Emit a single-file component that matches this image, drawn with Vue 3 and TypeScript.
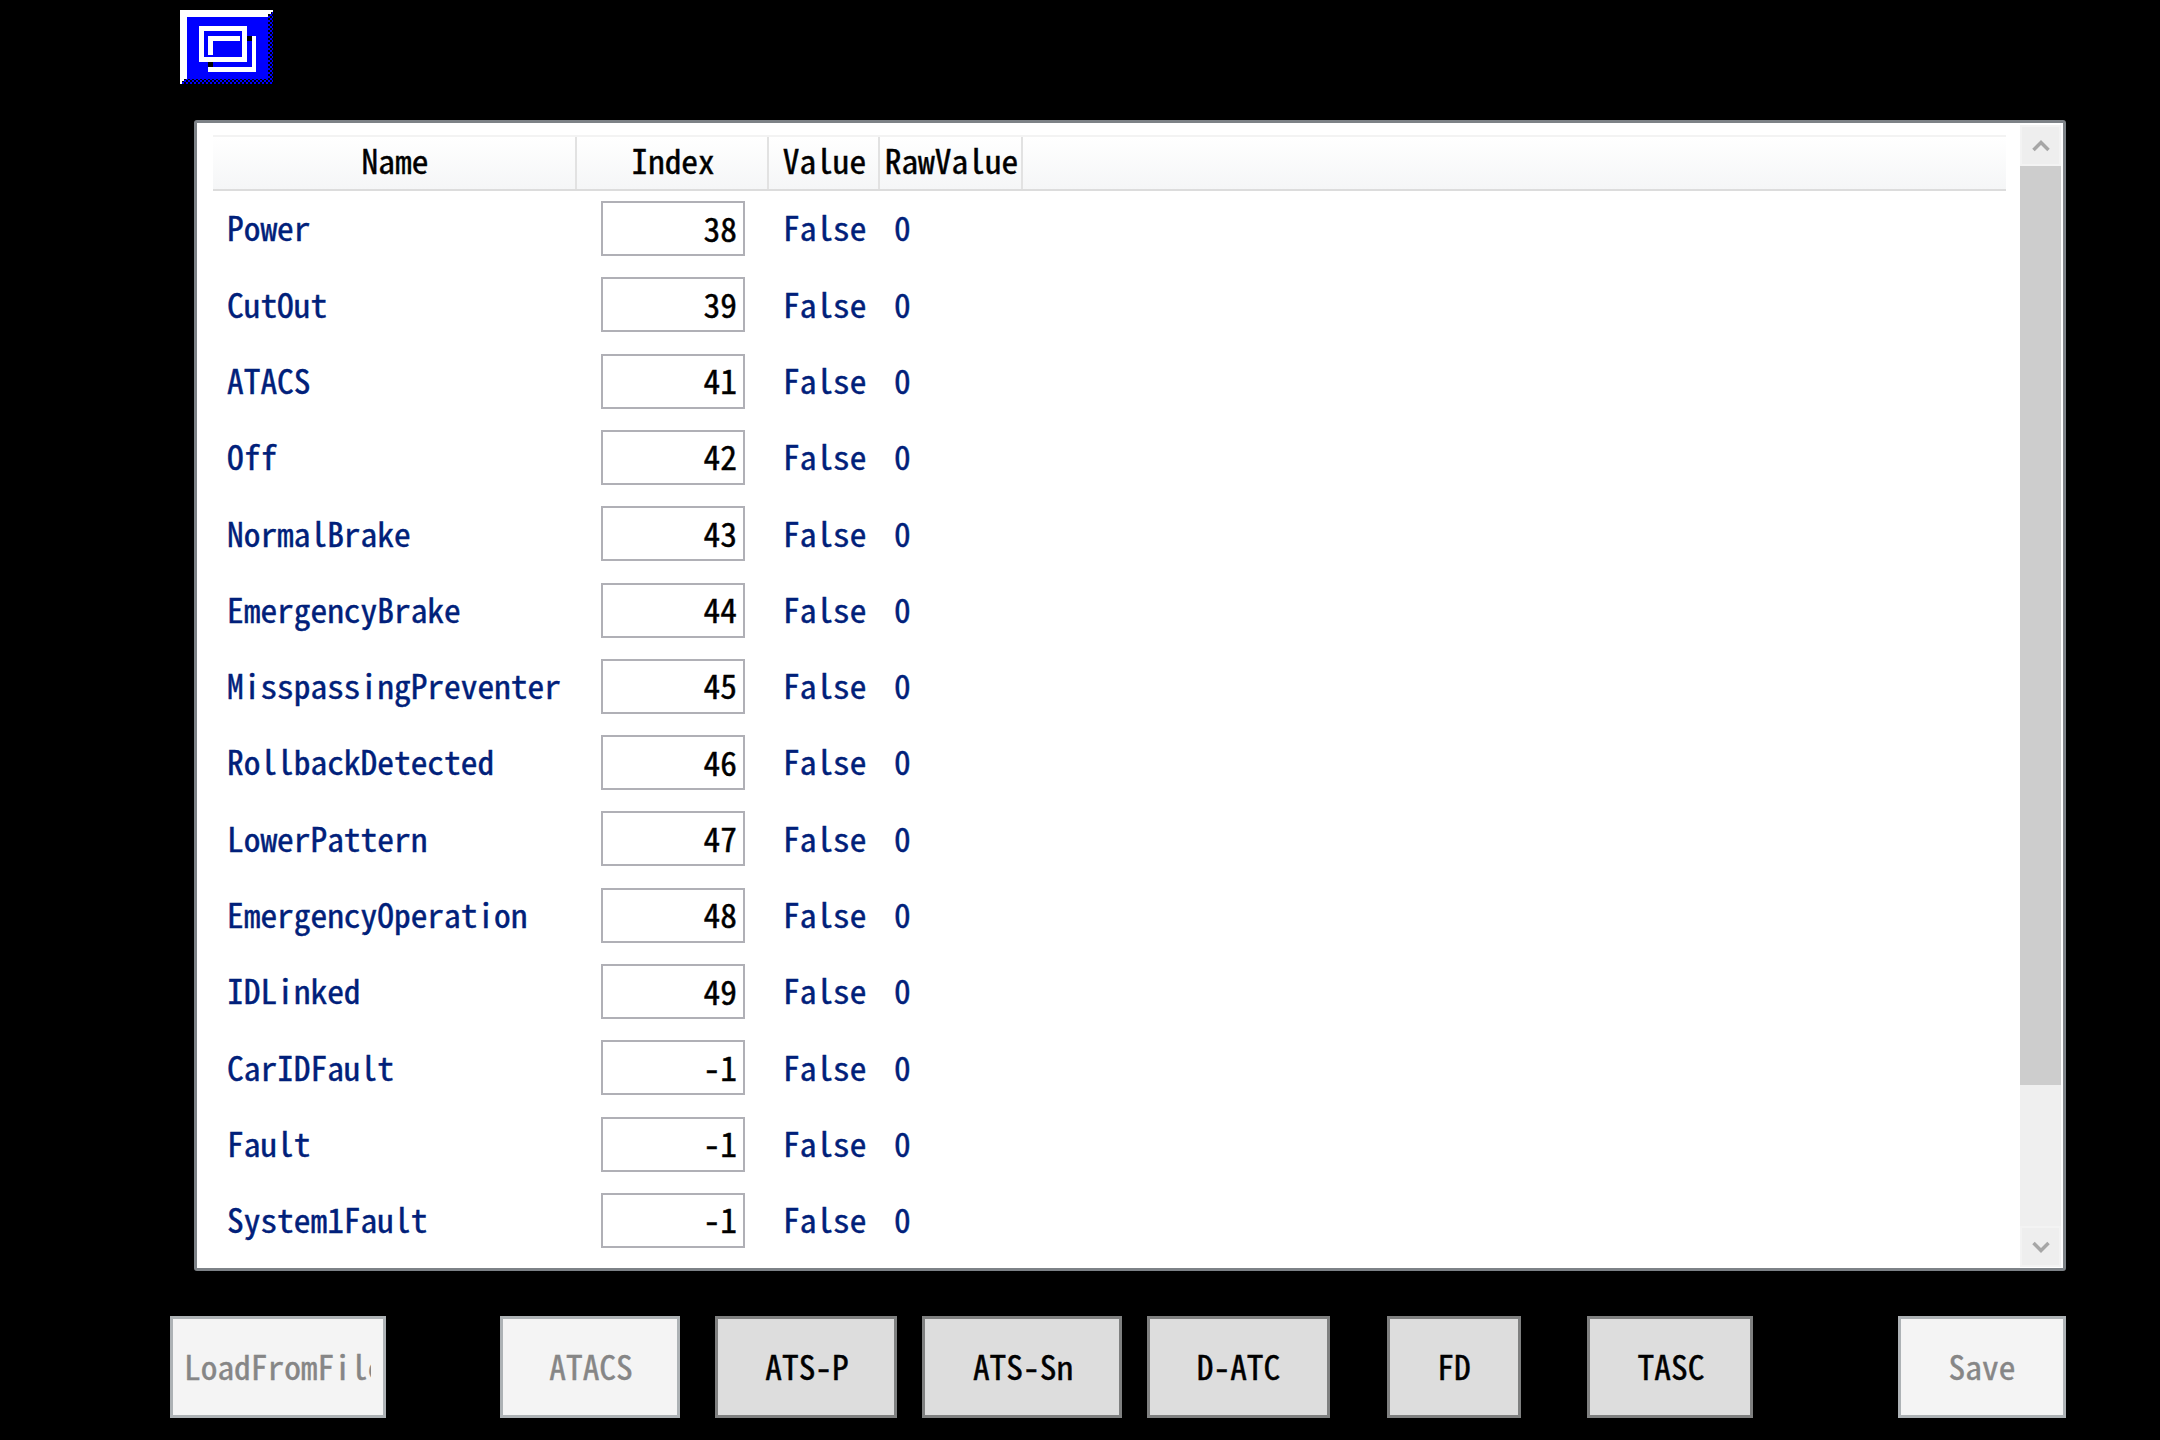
<script setup lang="ts">
interface Row { name: string; index: number }
const rows: Row[] = [
  { name: 'Power', index: 38 },
  { name: 'CutOut', index: 39 },
  { name: 'ATACS', index: 41 },
  { name: 'Off', index: 42 },
  { name: 'NormalBrake', index: 43 },
  { name: 'EmergencyBrake', index: 44 },
  { name: 'MisspassingPreventer', index: 45 },
  { name: 'RollbackDetected', index: 46 },
  { name: 'LowerPattern', index: 47 },
  { name: 'EmergencyOperation', index: 48 },
  { name: 'IDLinked', index: 49 },
  { name: 'CarIDFault', index: -1 },
  { name: 'Fault', index: -1 },
  { name: 'System1Fault', index: -1 },
]
</script>

<template>
  <div class="screen">
    <button class="window-btn" type="button" aria-label="Window">
      <svg width="93" height="74" viewBox="0 0 93 74" shape-rendering="crispEdges">
        <defs>
          <pattern id="dither" width="4" height="4" patternUnits="userSpaceOnUse">
            <rect width="4" height="4" fill="#0000ff" />
            <rect width="2" height="2" fill="#000" />
            <rect x="2" y="2" width="2" height="2" fill="#000" />
          </pattern>
        </defs>
        <rect width="93" height="74" fill="url(#dither)" />
        <rect x="7" y="7" width="81" height="62" fill="#0000ff" />
        <path d="M0 0H93V2H91V4H88V7H7V69H4V71H2V74H0Z" fill="#fff" />
        <path d="M19 16H67V52H19ZM24 21V47H62V21Z" fill="#fff" fill-rule="evenodd" />
        <path d="M28 26H60V31H33V45H28Z" fill="#fff" />
        <path d="M72 26H76V62H28V57H72Z" fill="#fff" />
        <rect x="67" y="26" width="5" height="5" fill="#000" />
        <rect x="28" y="52" width="5" height="5" fill="#000" />
      </svg>
    </button>

    <section class="panel">
      <div class="grid-area">
        <div class="head">
          <div class="hcell c-name">Name</div>
          <div class="hcell c-index">Index</div>
          <div class="hcell c-value">Value</div>
          <div class="hcell c-raw">RawValue</div>
        </div>
        <div class="rows">
          <div v-for="row in rows" :key="row.name" class="row">
            <div class="c-name name">{{ row.name }}</div>
            <div class="c-index idx-cell"><input class="idx" :value="row.index" readonly /></div>
            <div class="c-value val">False</div>
            <div class="c-raw raw">0</div>
          </div>
        </div>
      </div>
      <div class="scrollbar">
        <div class="sb-btn">
          <svg width="18" height="14" viewBox="0 0 18 14"><path d="M1.5 11L9 3.5L16.5 11" fill="none" stroke="#a6a6a6" stroke-width="3.5" /></svg>
        </div>
        <div class="sb-thumb"></div>
        <div class="sb-rest"></div>
        <div class="sb-btn">
          <svg width="18" height="14" viewBox="0 0 18 14"><path d="M1.5 3L9 10.5L16.5 3" fill="none" stroke="#a6a6a6" stroke-width="3.5" /></svg>
        </div>
      </div>
    </section>

    <div class="actions">
      <button class="btn w-load" type="button" disabled><span class="clip">LoadFromFile</span></button>
      <button class="btn w-atacs" type="button" disabled>ATACS</button>
      <button class="btn w-atsp" type="button">ATS-P</button>
      <button class="btn w-atssn" type="button">ATS-Sn</button>
      <button class="btn w-datc" type="button">D-ATC</button>
      <button class="btn w-fd" type="button">FD</button>
      <button class="btn w-tasc" type="button">TASC</button>
      <button class="btn w-save" type="button" disabled>Save</button>
    </div>
  </div>
</template>

<style>
html, body { margin: 0; background: #000; }
</style>

<style scoped>
.screen {
  width: 2160px;
  height: 1440px;
  background: #000;
  box-sizing: border-box;
  padding: 10px 94px 0 170px;
  display: flex;
  flex-direction: column;
  font-family: "Noto Sans Mono CJK JP", "Noto Sans CJK JP", "DejaVu Sans Mono", monospace;
  font-size: 33.4px;
  line-height: 1;
  -webkit-text-stroke: 0.45px currentColor;
  overflow: hidden;
}
.window-btn {
  display: block;
  width: 93px;
  height: 74px;
  margin: 0 0 36px 10px;
  padding: 0;
  border: 0;
  background: none;
}
.window-btn svg { display: block; }
.panel {
  box-sizing: border-box;
  width: 1872px;
  height: 1151px;
  margin-left: 24px;
  border: 3px solid #7d8287;
  border-radius: 3px;
  background: #fff;
  padding: 2px 2px 1px 16px;
  display: flex;
}
.grid-area {
  width: 1793px;
  margin-right: 14px;
  padding-top: 10px;
  flex: none;
}
.head {
  box-sizing: border-box;
  height: 56px;
  display: flex;
  border-top: 2px solid #f3f3f3;
  border-bottom: 2px solid #dcdcdc;
  background: linear-gradient(#fff, #f5f6f7);
  color: #000;
}
.hcell {
  box-sizing: border-box;
  border-right: 2px solid #e2e2e2;
  display: flex;
  align-items: center;
  justify-content: center;
  padding: 0 0 6px 2px;
}
.c-name { width: 364px; flex: none; }
.c-index { width: 192px; flex: none; }
.c-value { width: 111px; flex: none; }
.c-raw { width: 143px; flex: none; }
.rows { margin-top: -0.6px; }
.row {
  height: 76.3px;
  display: flex;
  align-items: center;
  color: #00207a;
}
.name, .val, .raw {
  box-sizing: border-box;
  padding-left: 14px;
  padding-bottom: 3px;
}
.idx-cell {
  box-sizing: border-box;
  display: flex;
  justify-content: flex-start;
  padding-left: 24px;
}
.idx {
  box-sizing: border-box;
  width: 144px;
  height: 55px;
  border: 2px solid #b0b0b6;
  padding: 0 6px 3px 0;
  margin: 0;
  font: inherit;
  color: #000;
  text-align: right;
  background: #fff;
  outline: none;
  border-radius: 0;
}
.scrollbar {
  width: 41px;
  flex: none;
  display: flex;
  flex-direction: column;
  background: #efefef;
}
.sb-btn {
  box-sizing: border-box;
  height: 41px;
  flex: none;
  border: 2px solid #f3f3f3;
  background: #eeeeee;
  display: flex;
  align-items: center;
  justify-content: center;
}
.sb-thumb { height: 919px; flex: none; background: #cdcdcd; }
.sb-rest { flex: 1; }
.actions {
  margin-top: 45px;
  display: flex;
  align-items: flex-start;
}
.btn {
  box-sizing: border-box;
  height: 102px;
  flex: none;
  border: 3px solid #7f8080;
  background: #dddddd;
  color: #000;
  font: inherit;
  padding: 0 0 3px;
  margin: 0;
  display: flex;
  align-items: center;
  justify-content: center;
}
.btn:disabled {
  background: #f4f4f4;
  border-color: #adb2b5;
  color: #868686;
}
.clip {
  display: block;
  width: 187px;
  overflow: hidden;
  white-space: nowrap;
  text-align: left;
}
.w-load { width: 216px; padding-right: 1px; }
.w-atacs { width: 180px; margin-left: 114px; padding-left: 2px; }
.w-atsp { width: 182px; margin-left: 35px; padding-left: 2px; }
.w-atssn { width: 200px; margin-left: 25px; padding-left: 2px; }
.w-datc { width: 183px; margin-left: 25px; }
.w-fd { width: 134px; margin-left: 57px; }
.w-tasc { width: 166px; margin-left: 66px; padding-left: 2px; }
.w-save { width: 168px; margin-left: 145px; }
</style>
